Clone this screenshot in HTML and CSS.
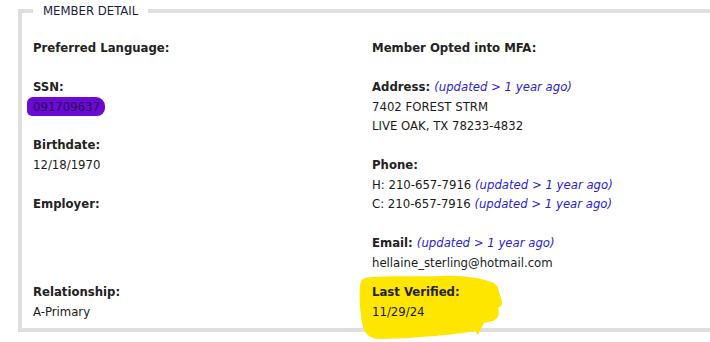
FILE: index.html
```html
<html>
<head>
    <link rel="stylesheet" href="styles.css">
</head>
<body>
    <fieldset class="member-detail">
        <legend>MEMBER DETAIL</legend>

        <div class="detail-grid">
            <div class="detail-col">
                <div class="field">
                    <div class="field-label">Preferred Language:</div>
                </div>
                <div class="field">
                    <div class="field-label">SSN:</div>
                    <div><span class="redact">091709637</span></div>
                </div>
                <div class="field">
                    <div class="field-label">Birthdate:</div>
                    <div>12/18/1970</div>
                </div>
                <div class="field">
                    <div class="field-label">Employer:</div>
                </div>
            </div>

            <div class="detail-col">
                <div class="field">
                    <div class="field-label">Member Opted into MFA:</div>
                </div>
                <div class="field">
                    <div class="field-label">Address: <span class="updated">(updated &gt; 1 year ago)</span></div>
                    <div>7402 FOREST STRM</div>
                    <div>LIVE OAK, TX 78233-4832</div>
                </div>
                <div class="field">
                    <div class="field-label">Phone:</div>
                    <div>H: 210-657-7916 <span class="updated">(updated &gt; 1 year ago)</span></div>
                    <div>C: 210-657-7916 <span class="updated">(updated &gt; 1 year ago)</span></div>
                </div>
                <div class="field">
                    <div class="field-label">Email: <span class="updated">(updated &gt; 1 year ago)</span></div>
                    <div>hellaine_sterling@hotmail.com</div>
                </div>
            </div>

            <div class="field">
                <div class="field-label">Relationship:</div>
                <div>A-Primary</div>
            </div>

            <div class="field marked">
                <svg class="marker" width="150" height="70" viewBox="0 0 150 70">
                    <path d="M7 3 C25 0, 60 2, 82 1 C104 0, 124 3, 136 8 L140 12 C141 20, 145 25, 144 30 L140 33 C142 38, 141 43, 135 46 L126 48 C124 52, 122 55, 120 60 L117 56 C95 60, 60 63, 22 64 C14 64, 8 61, 5 52 C2 40, 1 22, 2 11 C3 6, 4 4, 7 3 Z" fill="#ffe600"/>
                </svg>
                <div class="field-label">Last Verified:</div>
                <div>11/29/24</div>
            </div>
        </div>
    </fieldset>
</body>
</html>
```

FILE: styles.css
```css
body {
    margin: 0;
    background: #fff;
    font-family: "DejaVu Sans Condensed", "DejaVu Sans", sans-serif;
    font-size: 13px;
    color: #1a1a1a;
}

.member-detail {
    margin: 0 0 0 18px;
    padding: 17px 11px 7px 11px;
    border: 4px solid #dedede;
    border-right: none;
}

.member-detail legend {
    padding: 0 10px;
    line-height: 21px;
    color: #1c1c3a;
    font-size: 13px;
}

.detail-grid {
    display: grid;
    grid-template-columns: 339px 1fr;
    row-gap: 10px;
    line-height: 19.5px;
}

.field {
    margin-bottom: 19.5px;
}

.detail-col .field:last-child,
.detail-grid > .field {
    margin-bottom: 0;
}

.field-label {
    font-weight: bold;
    color: #222;
}

.updated {
    font-weight: normal;
    font-style: italic;
    color: #2a22d8;
}

.redact {
    display: inline-block;
    background: #6a0ad4;
    color: #2a0a55;
    margin-left: -6px;
    padding: 0 5px 0 6px;
    line-height: 19px;
    border-radius: 6px 9px 8px 5px;
}

.marked {
    position: relative;
}

.marker {
    position: absolute;
    left: -14px;
    top: -7px;
}

.marked div {
    position: relative;
}
```
